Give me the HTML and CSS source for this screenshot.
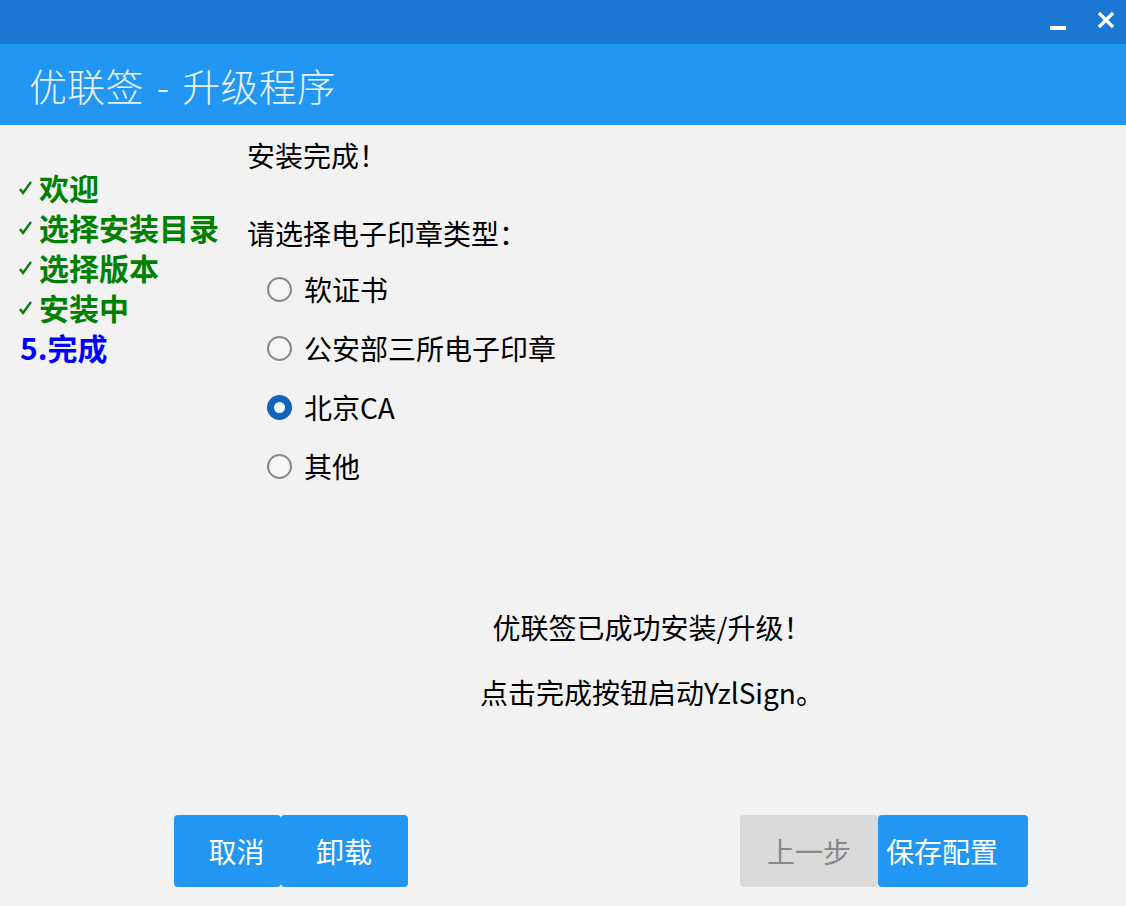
FILE: index.html
```html
<!DOCTYPE html>
<html lang="zh-CN">
<head>
    <meta charset="UTF-8">
    <title>优联签 - 升级程序</title>
    <link rel="stylesheet" href="styles.css">
</head>
<body>

<div class="window">
    <!-- 顶部窗口栏 -->
    <div class="topbar">
        <span class="btn-min"></span>
        <svg class="btn-close" width="20" height="20" viewBox="0 0 20 20">
            <path d="M3 3 L17 17 M17 3 L3 17" stroke="#fff" stroke-width="3.2"/>
        </svg>
    </div>

    <div class="header">优联签 - 升级程序</div>

    <div class="main">
        <!-- 步骤 -->
        <ul class="steps">
            <li class="done"><svg class="tick" width="16" height="16" viewBox="0 0 16 16"><path d="M2 9 L5 13 L13 2" fill="none" stroke="#0a7a0a" stroke-width="2.4"/></svg>欢迎</li>
            <li class="done"><svg class="tick" width="16" height="16" viewBox="0 0 16 16"><path d="M2 9 L5 13 L13 2" fill="none" stroke="#0a7a0a" stroke-width="2.4"/></svg>选择安装目录</li>
            <li class="done"><svg class="tick" width="16" height="16" viewBox="0 0 16 16"><path d="M2 9 L5 13 L13 2" fill="none" stroke="#0a7a0a" stroke-width="2.4"/></svg>选择版本</li>
            <li class="done"><svg class="tick" width="16" height="16" viewBox="0 0 16 16"><path d="M2 9 L5 13 L13 2" fill="none" stroke="#0a7a0a" stroke-width="2.4"/></svg>安装中</li>
            <li class="current">5.完成</li>
        </ul>

        <div class="content">
            <div class="line">安装完成！</div>
            <div class="line ask">请选择电子印章类型：</div>

            <div class="radios">
                <label class="radio"><span class="dot"></span>软证书</label>
                <label class="radio"><span class="dot"></span>公安部三所电子印章</label>
                <label class="radio"><span class="dot checked"></span>北京CA</label>
                <label class="radio"><span class="dot"></span>其他</label>
            </div>

            <div class="message">
                <div class="line">优联签已成功安装/升级！</div>
                <div class="line second">点击完成按钮启动YzlSign。</div>
            </div>
        </div>
    </div>

    <!-- 底部按钮 -->
    <div class="footer">
        <div class="group">
            <button class="btn btn-cancel">取消</button>
            <button class="btn btn-uninstall">卸载</button>
        </div>
        <div class="group">
            <button class="btn btn-prev" disabled>上一步</button>
            <button class="btn btn-save">保存配置</button>
        </div>
    </div>
</div>

</body>
</html>
```

FILE: styles.css
```css
body {
    margin: 0;
    background-color: #f2f2f2;
    font-family: "Noto Sans CJK SC", "Noto Sans", sans-serif;
    color: #000;
}
.window {
    width: 1126px;
    height: 906px;
    display: flex;
    flex-direction: column;
}
.topbar {
    height: 44px;
    background-color: #1a78d2;
    display: flex;
    justify-content: flex-end;
    align-items: center;
    gap: 30px;
    padding-right: 10px;
}
.btn-min {
    width: 16px;
    height: 4px;
    background-color: #fff;
    margin-top: 12px;
}
.btn-close {
    margin-bottom: 4px;
}
.header {
    height: 81px;
    background-color: #2196f3;
    color: #e8f1fc;
    font-size: 38px;
    font-weight: 300;
    line-height: 81px;
    padding-left: 29px;
    letter-spacing: 0.3px;
    word-spacing: 4px;
}
.main {
    height: 690px;
    display: flex;
}
.steps {
    list-style: none;
    margin: 0;
    padding: 42px 0 0 18px;
    width: 229px;
}
.steps li {
    height: 40px;
    line-height: 40px;
    font-size: 30px;
    font-weight: bold;
    display: flex;
    align-items: center;
}
.steps .done {
    color: #008000;
}
.steps .current {
    color: #0000ff;
    padding-left: 2px;
}
.tick {
    width: 16px;
    margin-right: 5px;
    margin-top: 2px;
}
.content {
    width: 810px;
    display: flex;
    flex-direction: column;
    padding-top: 10px;
    font-size: 28px;
}
.line {
    height: 40px;
    line-height: 40px;
}
.ask {
    margin-top: 38px;
}
.radios {
    margin-top: 16px;
    padding-left: 20px;
    display: flex;
    flex-direction: column;
    gap: 19px;
}
.radio {
    height: 40px;
    display: flex;
    align-items: center;
    gap: 12px;
    font-size: 28px;
}
.dot {
    width: 21px;
    height: 21px;
    border: 2px solid #888;
    border-radius: 50%;
    background-color: #f6f6f6;
}
.dot.checked {
    width: 11px;
    height: 11px;
    border: 7px solid #0f63bd;
    background-color: #fff;
}
.message {
    margin-top: 121px;
    text-align: center;
}
.message .second {
    margin-top: 25px;
}
.footer {
    height: 72px;
    display: flex;
    justify-content: space-between;
    padding: 0 98px 0 174px;
}
.group {
    display: flex;
}
.btn {
    height: 72px;
    border: none;
    border-radius: 4px;
    font-family: "Noto Sans CJK SC", "Noto Sans", sans-serif;
    font-size: 28px;
    color: #fff;
    background-color: #2196f3;
    padding: 0;
    cursor: pointer;
}
.btn-cancel {
    width: 107px;
    padding-left: 18px;
}
.btn-uninstall {
    width: 127px;
    text-align: left;
    padding-left: 35px;
}
.btn-prev {
    width: 138px;
    background-color: #dadada;
    color: #888;
    cursor: default;
}
.btn-save {
    width: 150px;
    text-align: left;
    padding-left: 8px;
}
```
